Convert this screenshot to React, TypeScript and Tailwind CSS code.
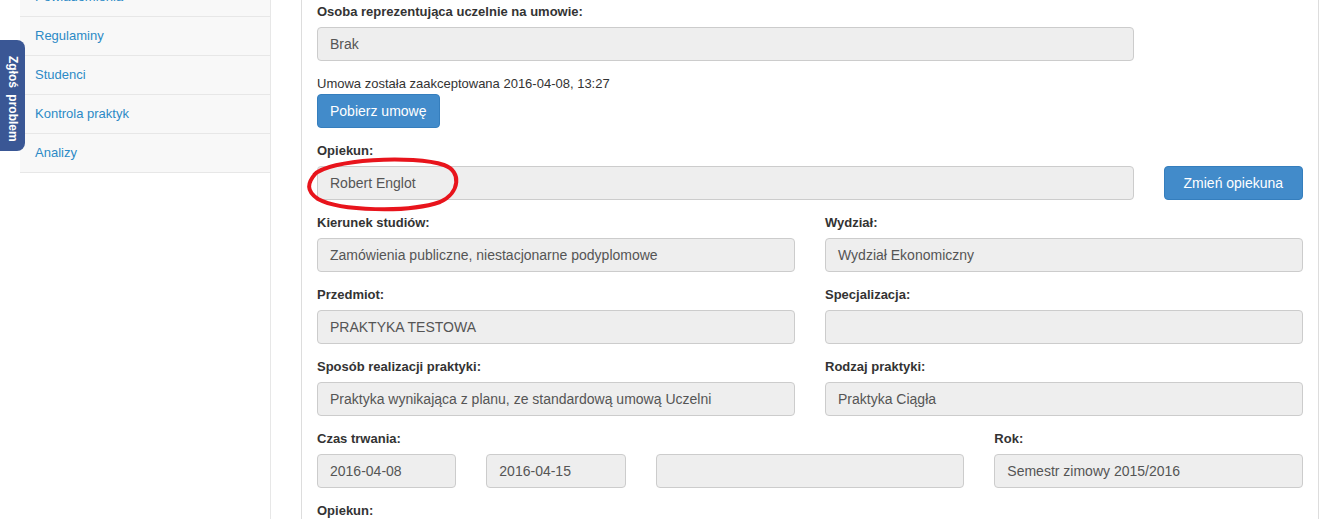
import React from 'react';

const menu = ['Powiadomienia', 'Regulaminy', 'Studenci', 'Kontrola praktyk', 'Analizy'];

function Label({ children }: { children: React.ReactNode }) {
  return <div className="mb-[6px] h-[18px] text-[13px] font-bold leading-[18px] text-[#333]">{children}</div>;
}

function Field({ value }: { value?: string }) {
  return (
    <div className="flex h-[34px] items-center rounded-[4px] border border-[#ccc] bg-[#eee] px-[12px] text-[14px] text-[#555]">
      {value}
    </div>
  );
}

export default function App() {
  return (
    <div className="relative flex h-[519px] overflow-hidden bg-white font-['Liberation_Sans',Arial,sans-serif]">
      {/* Zgłoś problem tab */}
      <div className="absolute left-0 top-[40px] z-10 flex h-[111px] w-[25px] items-center justify-center rounded-r-[8px] bg-[#3a5795] pt-[6px]">
        <span className="text-[12px] font-bold text-white [word-spacing:3px] [writing-mode:vertical-rl]">Zgłoś problem</span>
      </div>

      <aside className="ml-[20px] w-[251px] shrink-0 border-r border-[#e7e7e7]">
        <ul className="-mt-[22px]">
          {menu.map(item => (
            <li
              key={item}
              className="flex h-[39px] items-center border-b border-[#e7e7e7] bg-[#f8f8f8] pl-[15px] text-[13px] text-[#2c8ac6]"
            >
              {item}
            </li>
          ))}
        </ul>
      </aside>

      <main className="flex-1 pl-[30px] pr-[4px]">
        <div className="h-full border-x border-[#ddd] px-[15px] pt-[3px]">
          <div className="grid grid-cols-12 gap-x-[30px]">
            <div className="col-span-10">
              <Label>Osoba reprezentująca uczelnie na umowie:</Label>
              <Field value="Brak" />
            </div>
          </div>

          <div className="mt-[13px] h-[20px] text-[13px] leading-[20px] text-[#333]">
            Umowa została zaakceptowana 2016-04-08, 13:27
          </div>
          <button className="h-[34px] rounded-[4px] border border-[#357ebd] bg-[#428bca] px-[12px] text-[14px] text-white">
            Pobierz umowę
          </button>

          <div className="mt-[14px] grid grid-cols-12 gap-x-[30px]">
            <div className="relative col-span-10">
              <Label>Opiekun:</Label>
              <Field value="Robert Englot" />
              <svg
                className="pointer-events-none absolute left-[-11px] top-[11px]"
                width="154"
                height="60"
                viewBox="0 0 154 60"
              >
                <path
                  d="M8 22 C 22 6, 108 2, 138 12 C 156 18, 154 40, 134 49 C 102 60, 34 58, 12 46 C 0 38, 1 30, 10 20"
                  fill="none"
                  stroke="#e8141c"
                  strokeWidth="4"
                />
              </svg>
            </div>
            <div className="col-span-2 flex items-end">
              <button className="h-[34px] w-full rounded-[4px] border border-[#357ebd] bg-[#428bca] text-[14px] text-white">
                Zmień opiekuna
              </button>
            </div>
          </div>

          <div className="mt-[14px] grid grid-cols-12 gap-x-[30px] gap-y-[14px]">
            <div className="col-span-6">
              <Label>Kierunek studiów:</Label>
              <Field value="Zamówienia publiczne, niestacjonarne podyplomowe" />
            </div>
            <div className="col-span-6">
              <Label>Wydział:</Label>
              <Field value="Wydział Ekonomiczny" />
            </div>
            <div className="col-span-6">
              <Label>Przedmiot:</Label>
              <Field value="PRAKTYKA TESTOWA" />
            </div>
            <div className="col-span-6">
              <Label>Specjalizacja:</Label>
              <Field />
            </div>
            <div className="col-span-6">
              <Label>Sposób realizacji praktyki:</Label>
              <Field value="Praktyka wynikająca z planu, ze standardową umową Uczelni" />
            </div>
            <div className="col-span-6">
              <Label>Rodzaj praktyki:</Label>
              <Field value="Praktyka Ciągła" />
            </div>

            <div className="col-span-2">
              <Label>Czas trwania:</Label>
              <Field value="2016-04-08" />
            </div>
            <div className="col-span-2 pt-[24px]">
              <Field value="2016-04-15" />
            </div>
            <div className="col-span-4 pt-[24px]">
              <Field />
            </div>
            <div className="col-span-4">
              <Label>Rok:</Label>
              <Field value="Semestr zimowy 2015/2016" />
            </div>

            <div className="col-span-12">
              <Label>Opiekun:</Label>
            </div>
          </div>
        </div>
      </main>
    </div>
  );
}
